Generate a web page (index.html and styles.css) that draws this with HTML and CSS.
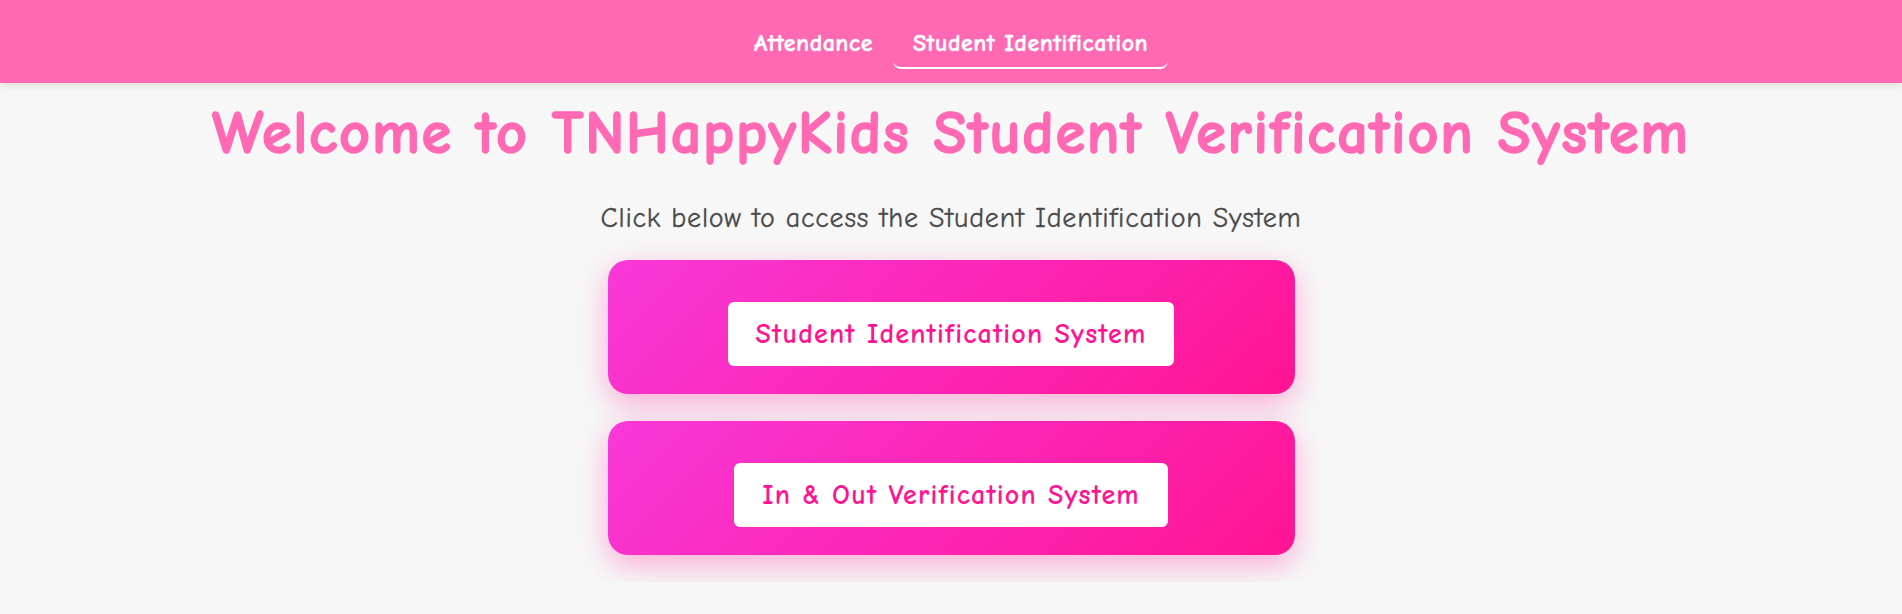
FILE: index.html
```html
<!DOCTYPE html>
<html lang="en">
<head>
    <meta charset="UTF-8">
    <meta name="viewport" content="width=device-width, initial-scale=1.0">
    <title>TNHappyKids Student Verification System</title>
    <link rel="stylesheet" href="styles.css">
</head>
<body>
    <nav class="navbar">
        <a href="#" class="nav-link">Attendance</a>
        <a href="#" class="nav-link active">Student Identification</a>
    </nav>

    <main class="container">
        <h1>Welcome to TNHappyKids Student Verification System</h1>
        <p class="subtitle">Click below to access the Student Identification System</p>

        <div class="card">
            <a href="#" class="card-button">Student Identification System</a>
        </div>

        <div class="card">
            <a href="#" class="card-button">In &amp; Out Verification System</a>
        </div>
    </main>
</body>
</html>
```

FILE: styles.css
```css
body {
    font-family: "Comic Sans MS", "Comic Neue", Lato, sans-serif;
    background-color: #f7f7f7;
    color: #555;
    margin: 0;
    padding: 0;
}

.navbar {
    height: 83px;
    display: flex;
    justify-content: center;
    align-items: flex-end;
    background-color: #ff69b4;
    box-shadow: 0 2px 8px rgba(0, 0, 0, 0.12);
}

.nav-link {
    color: #fff;
    text-decoration: none;
    font-weight: bold;
    font-size: 24px;
    letter-spacing: 0.5px;
    -webkit-text-stroke: 0.4px #fff;
    padding: 0 20px 10px;
    margin-bottom: 14px;
    border-bottom: 2px solid transparent;
    border-radius: 0 0 8px 8px;
}

.nav-link.active {
    border-bottom-color: #fff;
}

.container {
    display: flex;
    flex-direction: column;
    align-items: center;
    text-align: center;
}

h1 {
    color: #ff69b4;
    font-size: 60px;
    letter-spacing: 1.8px;
    -webkit-text-stroke: 1.5px #ff69b4;
    margin: 16px 0 0;
}

.subtitle {
    font-size: 28px;
    letter-spacing: 0.8px;
    color: #4a4a4a;
    -webkit-text-stroke: 0.3px #4a4a4a;
    margin: 34px 0 26px;
}

.card {
    width: 687px;
    box-sizing: border-box;
    padding: 42px 0 28px;
    margin-bottom: 27px;
    display: flex;
    justify-content: center;
    background: linear-gradient(135deg, #f838d8 0%, #ff1493 100%);
    border-radius: 20px;
    box-shadow: 0 10px 30px rgba(255, 20, 147, 0.32);
}

.card-button {
    display: block;
    height: 64px;
    line-height: 64px;
    padding: 0 28px;
    background-color: #fff;
    color: #ff1493;
    font-size: 28px;
    letter-spacing: 1.2px;
    font-weight: bold;
    text-decoration: none;
    border-radius: 6px;
}
```
